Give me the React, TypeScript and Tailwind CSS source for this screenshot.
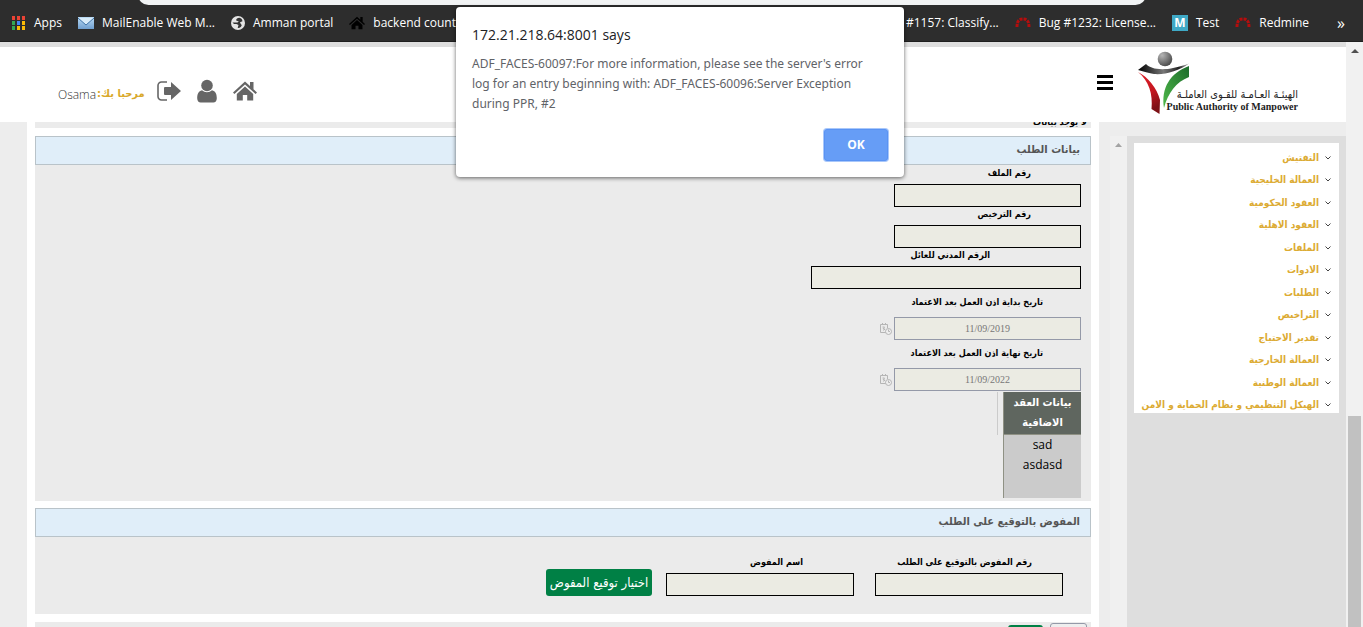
import type { ReactNode } from "react";

const menuItems = [
  "التفتيش",
  "العمالة الخليجية",
  "العقود الحكومية",
  "العقود الاهلية",
  "الملفات",
  "الادوات",
  "الطلبات",
  "التراخيص",
  "تقدير الاحتياج",
  "العمالة الخارجية",
  "العمالة الوطنية",
  "الهيكل التنظيمي و نظام الحماية و الامن",
];

const appColors = [
  "#ea4335", "#ea4335", "#ea4335",
  "#34a853", "#4285f4", "#fbbc05",
  "#34a853", "#fbbc05", "#fbbc05",
];

/* bookmark icons */
const AppsIcon = () => (
  <svg width="14" height="14" viewBox="0 0 14 14" aria-hidden="true">
    {appColors.map((color, i) => (
      <rect key={i} x={(i % 3) * 5} y={Math.floor(i / 3) * 5} width="3" height="4" fill={color} />
    ))}
  </svg>
);

const MailIcon = () => (
  <svg width="16" height="12" viewBox="0 0 16 12" aria-hidden="true">
    <defs>
      <linearGradient id="mail" x1="0" y1="0" x2="0" y2="1">
        <stop offset="0" stopColor="#bcdcf5" />
        <stop offset="1" stopColor="#6f9fd0" />
      </linearGradient>
    </defs>
    <rect width="16" height="12" fill="url(#mail)" />
    <path d="M0 1l8 7 8-7" fill="#d8ecfa" stroke="#3f74a8" strokeWidth="1" />
  </svg>
);

const GlobeIcon = () => (
  <svg width="14" height="14" viewBox="0 0 14 14" aria-hidden="true">
    <circle cx="7" cy="7" r="7" fill="#e4e4e4" />
    <path
      d="M8.500 1.800C6 2 5 3.200 5.200 4.500L7.800 5.500 6.500 6.500H1.500L3 8h2.500L7.500 9l-.8 3c2.300.3 4-1.500 4-3L9.500 7.500 9 6.300l2.500-1C11 3 10.200 2.300 8.500 1.800z"
      fill="#333"
    />
  </svg>
);

const HouseIcon = ({ size, color }: { size: number; color: string }) => (
  <svg width={size} height={size} viewBox="0 0 24 24" fill={color} aria-hidden="true">
    <path d="M12 2.500l5 4.600V3h3.500v7.300L24 13.500l-1.400 1.600L12 5.500 1.400 15.100 0 13.500z" />
    <path d="M12 7.500l8.200 7.500v6.500h-6v-5.500H9.800v5.500h-6V15z" />
  </svg>
);

const RedmineIcon = () => (
  <svg width="16" height="14" viewBox="0 0 16 14" aria-hidden="true">
    <path d="M2 11C2 4 5 3 8 3s6 1 6 8" fill="none" stroke="#b50d0d" strokeWidth="3" strokeDasharray="3 1" />
  </svg>
);

const MIcon = () => (
  <span className="flex size-4 items-center justify-center bg-[#3fa9c6] font-['Open_Sans',sans-serif] text-xs font-bold leading-4 text-white">
    M
  </span>
);

const Bookmark = ({ icon, children }: { icon: ReactNode; children: ReactNode }) => (
  <a href="#" className="flex items-center gap-2 whitespace-nowrap">
    {icon}
    {children}
  </a>
);

const BookmarksBar = () => (
  <div className="h-[42px] shrink-0 overflow-hidden border-b border-[#1f1f1f] bg-[#2d2d2d] font-['Open_Sans',sans-serif] text-xs text-white">
    <div className="-mt-4 ml-[138px] mr-[217px] h-[21px] rounded-full bg-[#f1f3f4]" />
    <nav className="flex h-9 items-center justify-between pl-3 pr-[18px]">
      <div className="flex gap-4">
        <Bookmark icon={<AppsIcon />}>Apps</Bookmark>
        <Bookmark icon={<MailIcon />}>MailEnable Web M...</Bookmark>
        <Bookmark icon={<GlobeIcon />}>Amman portal</Bookmark>
        <Bookmark icon={<HouseIcon size={16} color="#000" />}>backend counter</Bookmark>
      </div>
      <div className="flex items-center gap-4">
        <Bookmark icon={<RedmineIcon />}>Bug #1157: Classify...</Bookmark>
        <Bookmark icon={<RedmineIcon />}>Bug #1232: License...</Bookmark>
        <Bookmark icon={<MIcon />}>Test</Bookmark>
        <Bookmark icon={<RedmineIcon />}>Redmine</Bookmark>
        <button type="button" className="ml-3 text-base leading-4">»</button>
      </div>
    </nav>
  </div>
);

/* page header */
const Logo = () => (
  <div className="flex items-end">
    <svg width="54" height="66" viewBox="0 0 54 66" aria-hidden="true">
      <defs>
        <radialGradient id="head" cx="0.3" cy="0.25" r="0.8">
          <stop offset="0" stopColor="#b5b5b5" />
          <stop offset="1" stopColor="#4a4a4a" />
        </radialGradient>
        <linearGradient id="arms">
          <stop offset="0" stopColor="#000" />
          <stop offset="0.5" stopColor="#777" />
          <stop offset="0.8" stopColor="#222" />
          <stop offset="1" stopColor="#bbb" />
        </linearGradient>
        <linearGradient id="red" x1="0" y1="0" x2="0.3" y2="1">
          <stop offset="0" stopColor="#e0202a" />
          <stop offset="0.6" stopColor="#c4161f" />
          <stop offset="1" stopColor="#7d1015" />
        </linearGradient>
        <linearGradient id="green" x1="1" y1="0" x2="0" y2="1">
          <stop offset="0" stopColor="#1b6b2a" />
          <stop offset="1" stopColor="#4fb94a" />
        </linearGradient>
      </defs>
      <circle cx="28" cy="9" r="7.300" fill="url(#head)" />
      <path d="M1 20L9 14c6 6 20 8 43-.5C42 21 28 25 17 24 10 23 6 21 1 20z" fill="url(#arms)" />
      <path d="M1 22c10 5 19 16 22 28l-.5 14-8-5C16 44 12 31 1 22z" fill="url(#red)" />
      <path d="M52 16v11C39 32 31 43 27 58c-3-20 6-35 25-42z" fill="url(#green)" />
    </svg>
    <div className="-ml-6 pb-1 text-[#222]">
      <p dir="rtl" className="font-['DejaVu_Sans_Condensed','DejaVu_Sans',sans-serif] text-[11px] leading-[14px]">
        الهيئـة العـامـة للقـوى العاملـة
      </p>
      <p className="font-['Liberation_Serif',serif] text-[10px] font-bold leading-[10px]">
        Public Authority of Manpower
      </p>
    </div>
  </div>
);

const PageHeader = () => (
  <header className="flex h-20 shrink-0 items-center justify-between border-t-[5px] border-[#dedede] bg-white pb-1 pl-[58px] pr-12">
    <div className="flex items-center pt-4 text-[#666]">
      <p className="mr-3 flex gap-px pt-2 text-xs">
        <span className="font-['Open_Sans',sans-serif] font-light text-[#333]">Osama</span>
        <span dir="rtl" className="text-[11px] font-bold text-[#d9a92c]">مرحبا بك:</span>
      </p>
      <button type="button" aria-label="تسجيل الخروج" className="mr-4">
        <svg width="24" height="24" viewBox="0 0 24 24" fill="currentColor" aria-hidden="true">
          <path d="M10 3H4.500A3.500 3.500 0 001 6.500v11A3.500 3.500 0 004.500 21H10" fill="none" stroke="currentColor" strokeWidth="1.600" />
          <path d="M7 9q0-1 1-1h6V3l10 9-10 9v-5H8q-1 0-1-1z" />
        </svg>
      </button>
      <button type="button" aria-label="المستخدم" className="mr-4">
        <svg width="20" height="24" viewBox="0 0 20 24" fill="currentColor" aria-hidden="true">
          <circle cx="10" cy="6.500" r="5.800" />
          <path d="M5 11.200a7 7 0 0010 0c3.500.8 4.800 3.800 4.800 8 0 2.800-1.500 4.300-3.500 4.300H3.700c-2 0-3.500-1.500-3.500-4.300 0-4.200 1.300-7.200 4.800-8z" />
        </svg>
      </button>
      <button type="button" aria-label="الرئيسية">
        <HouseIcon size={24} color="currentColor" />
      </button>
    </div>
    <div className="flex items-center gap-6">
      <button type="button" aria-label="القائمة" className="flex w-4 flex-col gap-[3px]">
        <span className="h-[3px] bg-black" />
        <span className="h-[3px] bg-black" />
        <span className="h-[3px] bg-black" />
      </button>
      <Logo />
    </div>
  </header>
);

/* form */
const SectionTitle = ({ children }: { children: ReactNode }) => (
  <h2 className="h-[29px] border border-[#b9c3c9] bg-[#e0eef9] px-[10px] text-[11px] font-bold leading-[26px] text-[#555]">
    {children}
  </h2>
);

type FieldProps = {
  id: string;
  label: string;
  labelClass: string;
  inputClass?: string;
};

const Field = ({ id, label, labelClass, inputClass = "w-[187px]" }: FieldProps) => (
  <div className="flex flex-col items-start">
    <label htmlFor={id} className={`h-[18px] text-[9px] font-bold leading-[14px] ${labelClass}`}>
      {label}
    </label>
    <input id={id} className={`h-[23px] border border-black bg-[#ebebe3] px-1 ${inputClass}`} />
  </div>
);

const DateField = ({ id, label, value }: { id: string; label: string; value: string }) => (
  <div className="flex flex-col items-start">
    <label htmlFor={id} className="h-7 pr-[38px] text-[9px] font-bold leading-[26px]">
      {label}
    </label>
    <div className="flex items-center gap-[2px]">
      <input
        id={id}
        disabled
        defaultValue={value}
        className="h-[23px] w-[187px] border border-[#9499a8] bg-[#ebebe3] text-center font-['Liberation_Serif',serif] text-[10px] text-[#777]"
      />
      <svg width="12" height="12" viewBox="0 0 12 12" fill="none" stroke="#b5b5b5" aria-hidden="true">
        <path d="M6 9.500H.5v-8h7V5M2.500 0v2M5.500 0v2M2.500 4h2L3 6h2L3.500 7.500" />
        <circle cx="8.500" cy="8.500" r="3" fill="#eee" />
        <path d="M8.500 6.500v2h1.500" />
      </svg>
    </div>
  </div>
);

const RequestSection = () => (
  <section>
    <SectionTitle>بيانات الطلب</SectionTitle>
    <div className="h-[336px] bg-[#ebebeb] px-[10px] pt-px">
      <Field id="file-no" label="رقم الملف" labelClass="pr-[50px]" />
      <Field id="licence-no" label="رقم الترخيص" labelClass="pr-[50px]" />
      <Field id="civil-id" label="الرقم المدني للعائل" labelClass="pr-[91px]" inputClass="w-[270px]" />
      <DateField id="start-date" label="تاريخ بداية اذن العمل بعد الاعتماد" value="11/09/2019" />
      <DateField id="end-date" label="تاريخ نهاية اذن العمل بعد الاعتماد" value="11/09/2022" />
      <div className="mt-px flex items-start gap-[5px]">
        <table className="w-[78px] border-l border-[#8f9184] bg-[#cbcbcb] text-center">
          <thead>
            <tr>
              <th className="h-[42px] border-b border-[#8f9184] bg-[#5f665f] text-[11px] font-bold leading-5 text-white">
                بيانات العقد الاضافية
              </th>
            </tr>
          </thead>
          <tbody>
            <tr>
              <td className="h-16 align-top font-['Open_Sans',sans-serif] text-xs leading-5">
                sad
                <br />
                asdasd
              </td>
            </tr>
          </tbody>
        </table>
        <span className="h-[43px] w-px bg-[#cbcbcb]" />
      </div>
    </div>
  </section>
);

const SignerSection = () => (
  <section>
    <SectionTitle>المفوض بالتوقيع على الطلب</SectionTitle>
    <div className="flex h-[77px] items-end bg-[#ebebeb] pb-[18px] pr-7">
      <Field id="signer-no" label="رقم المفوض بالتوقيع على الطلب" labelClass="pr-[31px]" inputClass="w-[188px]" />
      <span className="w-[21px]" />
      <Field id="signer-name" label="اسم المفوض" labelClass="pr-[51px]" inputClass="w-[188px]" />
      <button type="button" className="mr-[14px] h-[27px] w-[106px] whitespace-nowrap rounded-[3px] bg-[#008045] text-[13px] text-white">
        اختيار توقيع المفوض
      </button>
    </div>
  </section>
);

const SideMenu = () => (
  <aside className="flex w-[247px] shrink-0 bg-[#ededed] pl-[11px] pt-[14px]">
    <div className="grow bg-[#dedede] p-[7px]">
      <ul className="flex h-[270px] flex-col bg-white pr-2">
        {menuItems.map((item) => (
          <li key={item} className="flex flex-1 items-end">
            <a href="#" className="flex items-center gap-[6px] whitespace-nowrap text-[10px] font-bold leading-4 text-[#dcab33]">
              <svg width="6" height="4" viewBox="0 0 6 4" fill="none" stroke="#444" aria-hidden="true">
                <path d="M.5.5L3 3 5.500.5" />
              </svg>
              {item}
            </a>
          </li>
        ))}
      </ul>
    </div>
    <div className="w-[17px] shrink-0 bg-[#f0f0f0] pt-[7px]">
      <svg width="17" height="4" viewBox="0 0 17 4" fill="#a3a3a3" aria-hidden="true">
        <path d="M5 4l3.500-4L12 4z" />
      </svg>
    </div>
  </aside>
);

const AlertDialog = () => (
  <div className="absolute inset-x-0 top-[7px] flex justify-center pr-[3px]">
    <div
      role="alertdialog"
      aria-labelledby="alert-title"
      className="w-[448px] rounded-sm bg-white p-4 font-['Open_Sans',sans-serif] shadow-[0_1px_4px_rgba(0,0,0,0.6)]"
    >
      <h1 id="alert-title" className="text-sm leading-6 text-[#202124]">172.21.218.64:8001 says</h1>
      <p className="mt-[7px] font-['Noto_Sans',sans-serif] text-xs leading-5 text-[#5f6368]">
        ADF_FACES-60097:For more information, please see the server's error
        <br />
        log for an entry beginning with: ADF_FACES-60096:Server Exception
        <br />
        during PPR, #2
      </p>
      <div className="mt-[15px] flex justify-end">
        <button type="button" className="h-8 w-16 rounded-[3px] border border-[#5a93f3] bg-[#669df6] text-xs font-bold text-white ring-1 ring-[#a8c7fa]">
          OK
        </button>
      </div>
    </div>
  </div>
);

export default function App() {
  return (
    <div className="relative flex h-screen flex-col overflow-hidden bg-white font-['DejaVu_Sans_Condensed','DejaVu_Sans',sans-serif] text-black">
      <BookmarksBar />
      <div className="flex min-h-0 grow">
        <div className="flex min-w-0 grow flex-col">
          <PageHeader />
          <div dir="rtl" className="flex min-h-0 grow overflow-hidden">
            <SideMenu />
            <main className="flex min-w-0 grow flex-col gap-[7px] px-2">
              <div className="flex h-[6px] shrink-0 items-end bg-[#ebebeb] pr-1 text-[9px] font-bold leading-3">
                لا يوجد بيانات
              </div>
              <div className="shrink-0 pt-px">
                <RequestSection />
              </div>
              <SignerSection />
              <div className="mt-px flex h-9 shrink-0 items-start gap-[7px] bg-[#ebebeb] pr-1 pt-px">
                <button type="button" aria-label="رجوع" className="h-7 w-[37px] shrink-0 rounded-[3px] border border-[#9499a8] bg-[#eee]" />
                <button type="button" aria-label="حفظ" className="mt-[2px] h-6 w-[35px] shrink-0 rounded-[3px] bg-[#008045]" />
              </div>
            </main>
            <div className="w-[27px] shrink-0 bg-[#ededed]" />
          </div>
        </div>
        <div className="flex w-[17px] shrink-0 flex-col items-center bg-[#f1f1f1] pt-[7px]">
          <svg width="8" height="4" viewBox="0 0 8 4" fill="#505050" aria-hidden="true">
            <path d="M0 4l4-4 4 4z" />
          </svg>
          <div className="mt-[363px] w-[13px] grow bg-[#c1c1c1]" />
        </div>
      </div>
      <AlertDialog />
    </div>
  );
}
